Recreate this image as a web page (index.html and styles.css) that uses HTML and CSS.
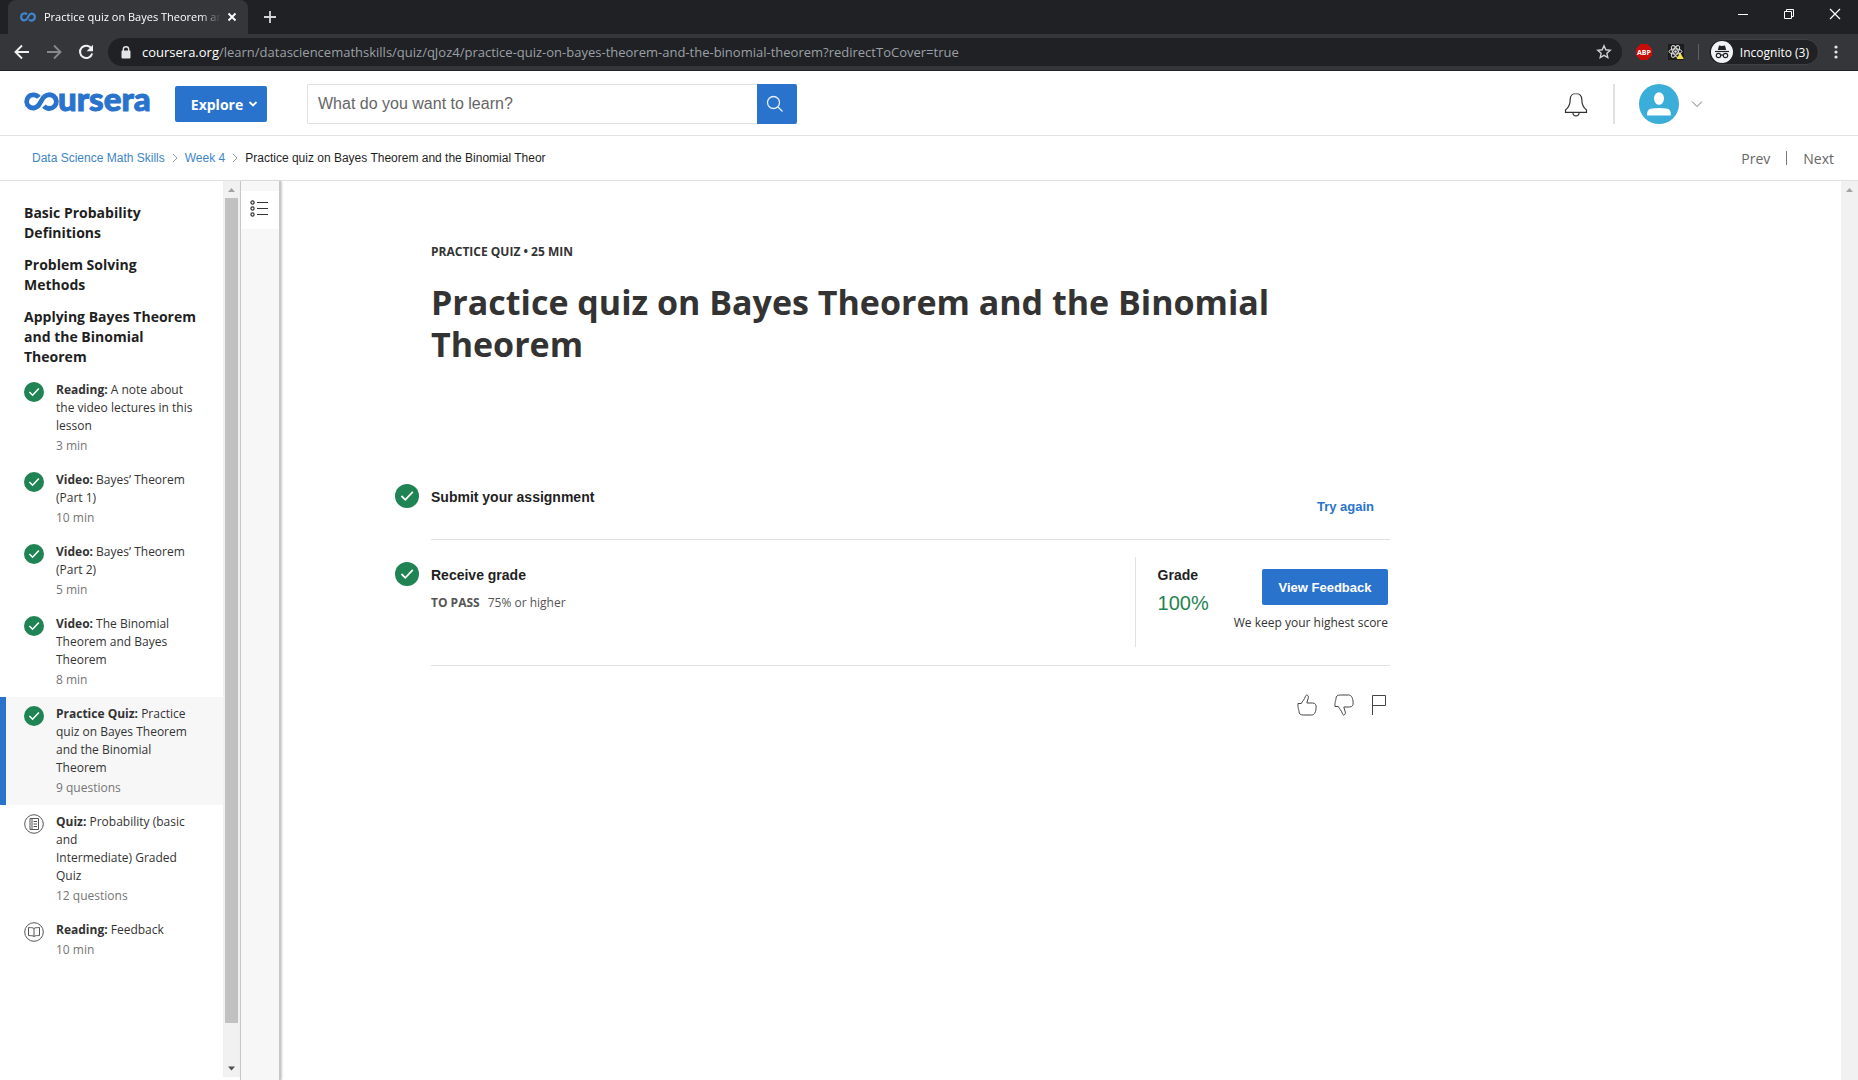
FILE: index.html
```html
<!DOCTYPE html>
<html lang="en">
<head>
<meta charset="utf-8">
<title>Practice quiz on Bayes Theorem and the Binomial Theorem</title>
<link rel="stylesheet" href="styles.css">
</head>
<body>
<svg class="defs" aria-hidden="true">
  <symbol id="check" viewBox="0 0 24 24"><circle cx="12" cy="12" r="12" fill="#1f8354"/><path d="M6.500 12l3.800 3.800 7.500-8" fill="none" stroke="#fff" stroke-width="1.800"/></symbol>
  <symbol id="crumb-sep" viewBox="0 0 6 10"><path d="M1 1l4 4-4 4" fill="none" stroke="#999" stroke-width="1"/></symbol>
</svg>

<div class="browser">
  <div class="tabstrip">
    <div class="tab">
      <svg class="favicon" viewBox="0 0 16 10"><path d="M7 2.200C5.600 .8 1.200.8 1.200 5s4.400 4.200 6.200 1.200l1.400-2.500C10.400.800 14.800 1 14.800 5s-4.300 4.200-5.800 2.600" fill="none" stroke="#3f86cf" stroke-width="2.200"/></svg>
      <span class="tab-title">Practice quiz on Bayes Theorem and the</span>
      <button class="icon-btn" aria-label="Close tab"><svg width="10" height="10" viewBox="0 0 10 10"><path d="M1.500 1.500l7 7m0-7l-7 7" stroke="#fff" stroke-width="1.800"/></svg></button>
    </div>
    <button class="icon-btn" aria-label="New tab"><svg width="14" height="14" viewBox="0 0 14 14"><path d="M7 1v12M1 7h12" stroke="#d5d6d8" stroke-width="1.800"/></svg></button>
    <div class="window-controls">
      <button class="icon-btn" aria-label="Minimize"><svg width="12" height="12" viewBox="0 0 12 12"><path d="M1 6.500h10" stroke="#fff"/></svg></button>
      <button class="icon-btn" aria-label="Restore"><svg width="12" height="12" viewBox="0 0 12 12"><path d="M1.500 3.500h7v7h-7zM3.500 3.500v-2h7v7h-2" fill="none" stroke="#fff"/></svg></button>
      <button class="icon-btn" aria-label="Close"><svg width="12" height="12" viewBox="0 0 12 12"><path d="M1 1l10 10M11 1L1 11" stroke="#fff" stroke-width="1.200"/></svg></button>
    </div>
  </div>
  <div class="toolbar">
    <div class="nav-buttons">
      <button class="icon-btn" aria-label="Back"><svg width="16" height="16" viewBox="0 0 16 16"><path d="M15 8H2M8 1.500L1.500 8 8 14.500" fill="none" stroke="#f1f1f2" stroke-width="1.900"/></svg></button>
      <button class="icon-btn" aria-label="Forward"><svg width="16" height="16" viewBox="0 0 16 16"><path d="M1 8h13M8 1.500L14.500 8 8 14.500" fill="none" stroke="#87888a" stroke-width="1.900"/></svg></button>
      <button class="icon-btn" aria-label="Reload"><svg width="16" height="16" viewBox="0 0 16 16"><path d="M13.500 4.600A6.200 6.200 0 1 0 14.200 9.500" fill="none" stroke="#f1f1f2" stroke-width="2"/><path d="M15 .8v6.400H8.600z" fill="#f1f1f2"/></svg></button>
    </div>
    <div class="address">
      <svg width="10" height="13" viewBox="0 0 10 13"><path d="M2.300 5V3.400a2.700 2.700 0 0 1 5.400 0V5" fill="none" stroke="#e4e5e6" stroke-width="1.400"/><rect x="0.500" y="4.500" width="9" height="8" rx="1" fill="#e4e5e6"/></svg>
      <span class="url"><span class="host">coursera.org</span>/learn/datasciencemathskills/quiz/qJoz4/practice-quiz-on-bayes-theorem-and-the-binomial-theorem?redirectToCover=true</span>
      <button class="icon-btn" aria-label="Bookmark this page"><svg width="16" height="16" viewBox="0 0 16 16"><path d="M8 1.800l1.800 4 4.400.5-3.300 3 .9 4.300L8 11.400l-3.800 2.200.9-4.300-3.300-3 4.400-.5z" fill="none" stroke="#cfd0d2" stroke-width="1.400"/></svg></button>
    </div>
    <button class="icon-btn abp" aria-label="Adblock Plus"><svg width="16" height="16" viewBox="0 0 16 16"><path d="M4.700 0h6.600L16 4.700v6.600L11.300 16H4.700L0 11.300V4.700z" fill="#c70d0a"/><text x="8" y="11" text-anchor="middle" class="abp-text">ABP</text></svg></button>
    <button class="icon-btn" aria-label="React tools"><svg width="16" height="16" viewBox="0 0 16 16"><rect width="16" height="16" fill="#1c1c1c"/><g fill="none" stroke="#ddd" stroke-width="1"><ellipse cx="7.500" cy="7.500" rx="6.500" ry="2.600"/><ellipse cx="7.500" cy="7.500" rx="6.500" ry="2.600" transform="rotate(60 7.500 7.500)"/><ellipse cx="7.500" cy="7.500" rx="6.500" ry="2.600" transform="rotate(120 7.500 7.500)"/></g><circle cx="7.500" cy="7.500" r="1.300" fill="#ddd"/><path d="M12.200 8.500L15.800 15H8.600z" fill="#f3e04a"/></svg></button>
    <span class="toolbar-divider"></span>
    <button class="incognito"><svg width="22" height="22" viewBox="0 0 22 22"><circle cx="11" cy="11" r="11" fill="#f1f3f4"/><path d="M8 4.500l3 .6 3-.6L15.200 9H6.800z" fill="#202124"/><path d="M4 10.500h14" stroke="#202124" stroke-width="1.200"/><g fill="none" stroke="#202124" stroke-width="1.200"><circle cx="7.500" cy="14.500" r="2.200"/><circle cx="14.500" cy="14.500" r="2.200"/><path d="M9.700 14.300q1.300-.8 2.600 0"/></g></svg><span>Incognito (3)</span></button>
    <button class="icon-btn menu" aria-label="Menu"><svg width="4" height="14" viewBox="0 0 4 14"><g fill="#e4e5e6"><circle cx="2" cy="2" r="1.600"/><circle cx="2" cy="7" r="1.600"/><circle cx="2" cy="12" r="1.600"/></g></svg></button>
  </div>
</div>

<header class="site-header">
  <a href="#" class="logo" aria-label="coursera"><svg width="36" height="20" viewBox="0 0 36 20"><path d="M14.800 5.300C12.600 2.300 7 1.800 4.200 5.200c-2.300 3-1.900 7 .8 9.300 3.200 2.500 8 1.800 10.300-2.200l3.200-5.400C20.800 2.900 26 1.500 29.500 4c3.300 2.500 3.800 7.400 1.100 10.200-3 3.200-8 3-10.600-.2" fill="none" stroke="#2a73cc" stroke-width="4.800"/></svg><span>ursera</span></a>
  <button class="explore">Explore<svg width="10" height="6" viewBox="0 0 10 6"><path d="M1.500 1L5 4.500 8.500 1" fill="none" stroke="#fff" stroke-width="1.800"/></svg></button>
  <form class="search">
    <input type="text" placeholder="What do you want to learn?" aria-label="What do you want to learn?">
    <button type="button" aria-label="Search"><svg width="18" height="18" viewBox="0 0 18 18"><g fill="none" stroke="#e6effa" stroke-width="1.300"><circle cx="7.500" cy="7.500" r="6"/><path d="M12 12l4.500 4.500"/></g></svg></button>
  </form>
  <div class="account">
    <button class="icon-btn" aria-label="Notifications"><svg width="24" height="26" viewBox="0 0 24 26"><g fill="none" stroke="#333" stroke-width="1.200"><path d="M12 2.500c-3.600 0-5.800 2.400-5.800 6 0 5.500-1.200 7.800-4.700 10.500v2.300h21V19c-3.500-2.700-4.700-5-4.700-10.500 0-3.600-2.200-6-5.800-6z"/><path d="M8.800 21.500c.4 4.600 6 4.600 6.400 0"/></g></svg></button>
    <span class="account-divider"></span>
    <button class="profile" aria-label="Account"><svg width="40" height="40" viewBox="0 0 40 40"><circle cx="20" cy="20" r="20" fill="#3badd9"/><ellipse cx="20" cy="14.500" rx="5" ry="6.300" fill="#fff"/><path d="M8 31.500c.2-5.500 1.500-6.500 5-7 4.600-.8 9.400-.8 14 0 3.500.5 4.800 1.500 5 7z" fill="#fff"/></svg><svg width="12" height="8" viewBox="0 0 12 8"><path d="M1 1.500l5 5 5-5" fill="none" stroke="#777"/></svg></button>
  </div>
</header>

<nav class="breadcrumbs">
  <a href="#">Data Science Math Skills</a>
  <svg width="6" height="10"><use href="#crumb-sep"/></svg>
  <a href="#">Week 4</a>
  <svg width="6" height="10"><use href="#crumb-sep"/></svg>
  <span class="current">Practice quiz on Bayes Theorem and the Binomial Theor</span>
  <div class="pager"><a href="#">Prev</a><span class="pager-divider"></span><a href="#">Next</a></div>
</nav>

<div class="body">
  <aside class="outline">
    <h2>Basic Probability Definitions</h2>
    <h2>Problem Solving Methods</h2>
    <h2>Applying Bayes Theorem and the Binomial Theorem</h2>
    <ul>
      <li><a href="#"><svg><use href="#check"/></svg><span><strong>Reading:</strong> A note about the video lectures in this lesson<small>3 min</small></span></a></li>
      <li><a href="#"><svg><use href="#check"/></svg><span><strong>Video:</strong> Bayes’ Theorem (Part 1)<small>10 min</small></span></a></li>
      <li><a href="#"><svg><use href="#check"/></svg><span><strong>Video:</strong> Bayes’ Theorem (Part 2)<small>5 min</small></span></a></li>
      <li><a href="#"><svg><use href="#check"/></svg><span><strong>Video:</strong> The Binomial Theorem and Bayes Theorem<small>8 min</small></span></a></li>
      <li><a href="#" class="selected"><svg><use href="#check"/></svg><span><strong>Practice Quiz:</strong> Practice quiz on Bayes Theorem and the Binomial Theorem<small>9 questions</small></span></a></li>
      <li><a href="#"><svg viewBox="0 0 20 20"><g fill="none" stroke="#555" stroke-width="1"><circle cx="10" cy="10" r="9.300"/><path d="M6 4.500h8.500v11H6zM8 4.500v11M9.500 7.500h3.500M9.500 10h3.500M9.500 12.500h3.500"/></g></svg><span><strong>Quiz:</strong> Probability (basic and<br>Intermediate) Graded Quiz<small>12 questions</small></span></a></li>
      <li><a href="#"><svg viewBox="0 0 20 20"><g fill="none" stroke="#555" stroke-width="1"><circle cx="10" cy="10" r="9.300"/><path d="M10 6.500C9 5.600 7 5.600 4.500 5.600v8c2.500 0 4.500 0 5.500.9 1-.9 3-.9 5.500-.9v-8c-2.500 0-4.500 0-5.500.9zM10 6.500v8"/></g></svg><span><strong>Reading:</strong> Feedback<small>10 min</small></span></a></li>
    </ul>
  </aside>
  <div class="scrollbar outline-scroll">
    <svg width="17" height="17" viewBox="0 0 17 17"><path d="M5 11l3.500-4 3.500 4z" fill="#a3a3a3"/></svg>
    <span class="thumb"></span>
    <svg width="17" height="17" viewBox="0 0 17 17"><path d="M5 6.500l3.500 4 3.500-4z" fill="#505050"/></svg>
  </div>
  <div class="rail">
    <button aria-label="Course outline"><svg width="18" height="18" viewBox="0 0 18 18"><g fill="none" stroke="#333" stroke-width="1.200"><circle cx="2.500" cy="2.500" r="1.600"/><circle cx="2.500" cy="8.500" r="1.600"/><circle cx="2.500" cy="14.500" r="1.600"/><path d="M7 2.500h11M7 8.500h11M7 14.500h11"/></g></svg></button>
  </div>
  <main>
    <p class="kicker">PRACTICE QUIZ • 25 MIN</p>
    <h1>Practice quiz on Bayes Theorem and the Binomial Theorem</h1>
    <section class="step submit">
      <svg class="step-icon"><use href="#check"/></svg>
      <h3>Submit your assignment</h3>
      <a href="#" class="try">Try again</a>
    </section>
    <section class="step receive">
      <svg class="step-icon"><use href="#check"/></svg>
      <div class="requirement"><h3>Receive grade</h3><p><strong>TO PASS</strong>75% or higher</p></div>
      <div class="result">
        <div class="grade"><h3>Grade</h3><p>100%</p></div>
        <div class="feedback"><button>View Feedback</button><p>We keep your highest score</p></div>
      </div>
    </section>
    <div class="reactions">
      <button class="icon-btn" aria-label="Like"><svg width="20" height="22" viewBox="0 0 20 22"><path d="M1 9.500h3.300C5.500 7 7.500 5.500 8.300 2.800 8.800.8 9.800.800 10.500 1.300c1.200.8 1 2 .5 3.700C10.500 6.500 10 7.500 9.900 9h5.600c2.800 0 3.800 2 3.600 4.200 0 4.300-1.500 7.800-4.500 7.800H6.500C3.500 21 2 20 2 17.500c0-2-1.300-3-1-8z" fill="none" stroke="#444"/></svg></button>
      <button class="icon-btn" aria-label="Dislike"><svg width="20" height="22" viewBox="0 0 20 22"><path d="M1 12.500h3.300c1.200 2.500 3.200 4 4 6.700.5 2 1.500 2 2.200 1.500 1.200-.8 1-2 .5-3.700-.5-1.500-1-2.500-1.100-4h5.600c2.800 0 3.800-2 3.600-4.200C19.100 4.500 17.600 1 14.600 1H6.500C3.500 1 2 2 2 4.500c0 2-1.300 3-1 8z" fill="none" stroke="#444"/></svg></button>
      <button class="icon-btn" aria-label="Flag"><svg width="16" height="22" viewBox="0 0 16 22"><path d="M1.500 21V1.500h13v10h-13" fill="none" stroke="#444"/></svg></button>
    </div>
  </main>
  <div class="scrollbar">
    <svg width="17" height="17" viewBox="0 0 17 17"><path d="M5 11l3.500-4 3.500 4z" fill="#a3a3a3"/></svg>
  </div>
</div>
</body>
</html>
```
FILE: styles.css
```css
* { box-sizing: border-box; }
body {
  margin: 0;
  min-height: 100vh;
  display: flex;
  flex-direction: column;
  background: #fff;
  color: #333;
  font-family: "Open Sans", sans-serif;
  font-size: 12px;
}
h1, h2, h3, p, ul { margin: 0; padding: 0; }
ul { list-style: none; }
a { text-decoration: none; color: inherit; }
button { font-family: inherit; border: 0; padding: 0; cursor: pointer; }
svg { display: block; flex: none; }
.defs { position: absolute; width: 0; height: 0; }
.icon-btn { background: none; display: flex; }

/* browser frame */
.browser { background: #35363a; color: #fff; border-bottom: 1px solid #202124; }
.tabstrip {
  height: 34px;
  padding-left: 8px;
  background: #202124;
  display: flex;
  align-items: center;
}
.tab {
  width: 240px;
  height: 34px;
  margin-right: 15px;
  padding: 0 11px 0 12px;
  border-radius: 8px 8px 0 0;
  background: #35363a;
  display: flex;
  align-items: center;
}
.favicon { width: 16px; height: 10px; margin-right: 8px; }
.tab-title {
  flex: 1;
  overflow: hidden;
  white-space: nowrap;
  font-size: 11px;
  margin: 0 6px 2px 0;
  -webkit-mask-image: linear-gradient(to right, #000 88%, transparent);
  mask-image: linear-gradient(to right, #000 88%, transparent);
}
.window-controls { margin: 0 17px 6px auto; display: flex; gap: 34px; }
.toolbar { height: 36px; padding: 0 20px 0 14px; display: flex; align-items: center; }
.nav-buttons { display: flex; gap: 16px; margin-right: 14px; }
.address {
  flex: 1;
  height: 28px;
  margin-right: 14px;
  padding: 0 10px 0 13px;
  border-radius: 14px;
  background: #202124;
  display: flex;
  align-items: center;
  gap: 11px;
}
.url { flex: 1; font-size: 13px; color: #9aa0a6; white-space: nowrap; }
.host { color: #fff; }
.abp { margin-right: 16px; }
.abp-text { font: bold 7px "Open Sans", sans-serif; fill: #fff; }
.toolbar-divider { width: 1px; height: 16px; margin: 0 9px 0 14px; background: #5f6064; }
.incognito {
  height: 26px;
  padding: 0 9px 0 2px;
  border: 1px solid #3f4044;
  border-radius: 13px;
  background: #202124;
  color: #fff;
  font-size: 12px;
  display: flex;
  align-items: center;
  gap: 7px;
}
.menu { margin-left: 15px; }

/* site header */
.site-header {
  height: 65px;
  padding: 2px 155px 0 24px;
  border-bottom: 1px solid #e1e1e1;
  display: flex;
  align-items: center;
}
.logo {
  display: flex;
  align-items: center;
  margin-right: 24px;
  width: 127px;
  color: #2a73cc;
  font: 900 33px/36px Lato, sans-serif;
}
.logo svg { margin-bottom: 4px; }
.logo span { margin: 0 0 12px -2px; -webkit-text-stroke: 1px #2a73cc; }
.explore {
  width: 92px;
  height: 36px;
  padding-left: 7px;
  border-radius: 2px;
  background: #2a73cc;
  color: #fff;
  font-size: 14px;
  font-weight: 700;
  display: flex;
  align-items: center;
  justify-content: center;
  gap: 5px;
}
.search { display: flex; width: 490px; margin-left: 40px; }
.search input {
  flex: 1;
  min-width: 0;
  height: 40px;
  padding: 0 10px;
  border: 1px solid #e1e1e1;
  border-right: 0;
  border-radius: 2px 0 0 2px;
  font: 16px "Liberation Sans", sans-serif;
}
.search input::placeholder { color: #666; opacity: 1; }
.search button {
  width: 40px;
  height: 40px;
  padding-right: 4px;
  border-radius: 0 2px 2px 0;
  background: #2a73cc;
  display: flex;
  align-items: center;
  justify-content: center;
}
.account { margin-left: auto; display: flex; align-items: center; }
.account-divider { width: 2px; height: 40px; margin: 0 24px 0 25px; background: #e1e1e1; }
.profile { background: none; display: flex; align-items: center; gap: 12px; }

/* breadcrumbs */
.breadcrumbs {
  height: 45px;
  padding: 0 24px 0 32px;
  border-bottom: 1px solid #e1e1e1;
  display: flex;
  align-items: center;
  gap: 7px;
  font-family: "Liberation Sans", sans-serif;
  color: #3d85c6;
}
.current { color: #1f1f1f; }
.pager {
  margin-left: auto;
  display: flex;
  align-items: center;
  gap: 16px;
  font: 14px "Open Sans", sans-serif;
  color: #666;
}
.pager-divider { width: 1px; height: 14px; background: #777; }

/* page body */
.body { flex: 1; display: flex; }
.outline { width: 223px; flex: none; padding-top: 22px; }
.outline h2 {
  margin: 0 24px 12px;
  font-size: 14px;
  line-height: 20px;
  font-weight: 700;
  color: #1f1f1f;
}
.outline ul { margin-top: -6px; }
.outline li a {
  display: flex;
  gap: 12px;
  padding: 8px 24px 8px 18px;
  border-left: 6px solid transparent;
  line-height: 18px;
}
.outline li svg { width: 20px; height: 20px; margin-top: 1px; }
.outline small { display: block; margin-top: 2px; font-size: 12px; color: #757575; }
.outline .selected { background: #f7f7f7; border-color: #2a73cc; }
.scrollbar { width: 17px; flex: none; background: #f1f1f1; display: flex; flex-direction: column; }
.outline-scroll { margin-bottom: 3px; }
.thumb { flex: 1; margin: 0 2px 37px; background: #c1c1c1; }
.rail {
  width: 41px;
  flex: none;
  margin-right: 1px;
  padding-top: 10px;
  border-left: 1px solid #c7c7c7;
  border-right: 2px solid #c7c7c7;
  background: #f7f7f7;
  box-shadow: 1px 0 2px #ccc;
}
.rail button {
  width: 38px;
  height: 38px;
  padding: 0 3px 3px 0;
  background: #fff;
  display: flex;
  align-items: center;
  justify-content: center;
}
main { flex: 1; max-width: 1559px; padding: 62px 24px 24px 149px; }
main > * { max-width: 959px; }
.kicker { line-height: 18px; font-weight: 700; }
h1 { margin-top: 20px; font-size: 34px; line-height: 42px; font-weight: 700; }
h3 { font: bold 14px/20px "Liberation Sans", sans-serif; color: #1f1f1f; }

/* assignment steps */
.step { display: flex; align-items: flex-start; border-bottom: 1px solid #e1e1e1; }
.step-icon { width: 24px; height: 24px; margin: -3px 12px 0 -36px; }
.submit { margin-top: 122px; height: 53px; }
.try { margin: 10px 16px 0 auto; font: bold 13px/20px "Liberation Sans", sans-serif; color: #2a73cc; }
.receive { padding: 17px 0 18px; }
.receive .step-icon { margin-top: 5px; }
.requirement { padding-top: 8px; }
.requirement p { margin-top: 9px; line-height: 18px; color: #555; }
.requirement strong { margin-right: 8px; }
.result {
  margin-left: auto;
  height: 90px;
  padding: 8px 2px 0 22px;
  border-left: 1px solid #e1e1e1;
  display: flex;
  gap: 25px;
}
.grade p { margin-top: 6px; font: 20px/24px "Liberation Sans", sans-serif; color: #1f8354; }
.feedback { display: flex; flex-direction: column; align-items: flex-end; padding-top: 4px; }
.feedback button {
  width: 126px;
  height: 36px;
  border-radius: 2px;
  background: #2a73cc;
  color: #fff;
  font: bold 13px "Liberation Sans", sans-serif;
}
.feedback p { margin-top: 9px; line-height: 18px; }
.reactions { margin-top: 28px; display: flex; justify-content: flex-end; gap: 17px; padding-right: 3px; }
```
